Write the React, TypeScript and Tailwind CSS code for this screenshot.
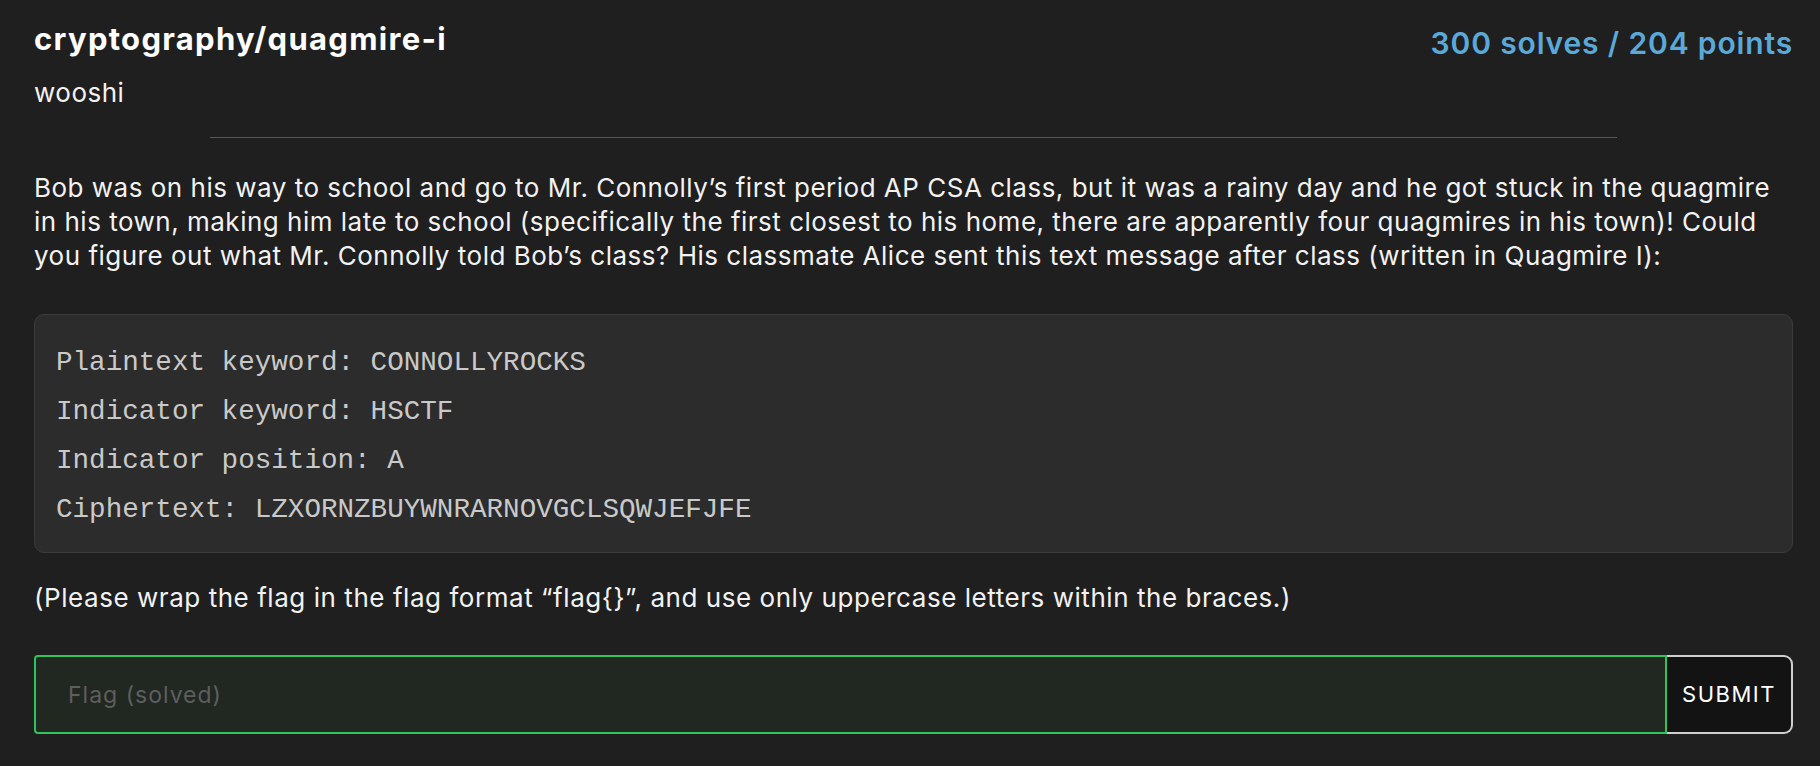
import { useState } from "react";

const codeLines = [
  "Plaintext keyword: CONNOLLYROCKS",
  "Indicator keyword: HSCTF",
  "Indicator position: A",
  "Ciphertext: LZXORNZBUYWNRARNOVGCLSQWJEFJFE",
];

const App = () => {
  const [flag, setFlag] = useState("");

  return (
    <div className="min-h-screen bg-[#1f1f1f] pl-[34px] pr-[27px] pt-[18px] font-['Inter',sans-serif] text-[#f2f2f2]">
      {/* header */}
      <div className="flex items-start justify-between">
        <div>
          <h1 className="text-[31px] font-bold leading-[42px] tracking-[1.3px] text-white">cryptography/quagmire-i</h1>
          <div className="mt-[16px] text-[26px] leading-[34px] tracking-[0.5px]">wooshi</div>
        </div>
        <div className="pt-[2px] text-[30px] font-semibold leading-[46px] tracking-[0.85px] text-[#5ba9d8]">
          300 solves / 204 points
        </div>
      </div>

      <div className="mx-auto mt-[27px] w-[80%] border-t border-[#575757]" />

      <p className="mt-[33px] text-[26px] leading-[34px] tracking-[0.5px]">
        Bob was on his way to school and go to Mr. Connolly’s first period AP CSA class, but it was a rainy day and he
        got stuck in the quagmire in his town, making him late to school (specifically the first closest to his home,
        there are apparently four quagmires in his town)! Could you figure out what Mr. Connolly told Bob’s class? His
        classmate Alice sent this text message after class (written in Quagmire I):
      </p>

      <div className="mt-[41px] rounded-[10px] border border-[#3b3b3b] bg-[#2c2c2c] px-[21px] pb-[18px] pt-[23px]">
        {codeLines.map((line) => (
          <div key={line} className="font-['Liberation_Mono',monospace] text-[27.6px] leading-[49px] text-[#c9c9c9]">
            {line}
          </div>
        ))}
      </div>

      <p className="mt-[28px] text-[26px] leading-[34px] tracking-[0.55px]">
        (Please wrap the flag in the flag format “flag{"{}"}”, and use only uppercase letters within the braces.)
      </p>

      <form className="mt-[40px] flex h-[79px]" onSubmit={(e) => e.preventDefault()}>
        <input
          value={flag}
          onChange={(e) => setFlag(e.target.value)}
          placeholder="Flag (solved)"
          className="h-full flex-1 rounded-l-[4px] border-2 border-[#2fc35b] bg-[#212721] pl-[32px] text-[23px] tracking-[1px] text-white outline-none placeholder:text-[#5e5e5e]"
        />
        <button
          type="submit"
          className="h-full w-[126px] rounded-r-[9px] border-2 border-l-0 border-[#cfcfcf] bg-[#131313] text-[22px] tracking-[1.5px] text-white"
        >
          SUBMIT
        </button>
      </form>
    </div>
  );
};

export default App;
